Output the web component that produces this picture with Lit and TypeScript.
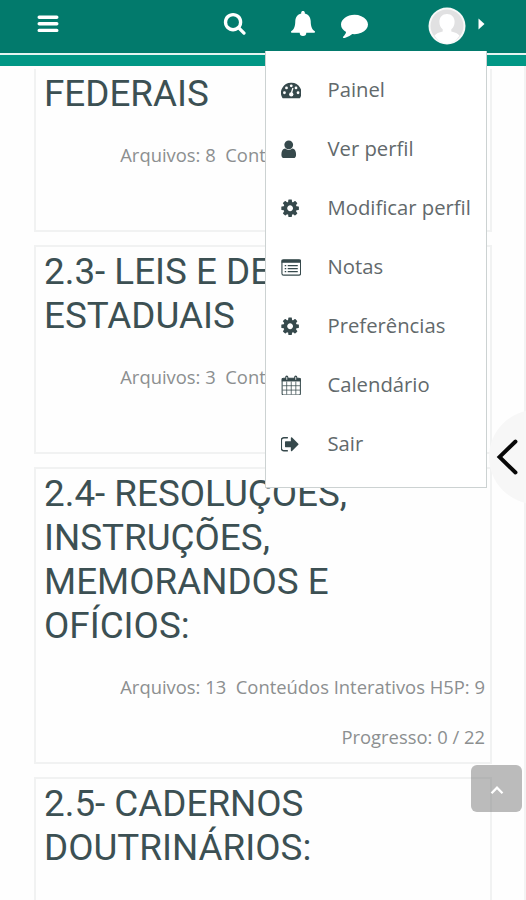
import { LitElement, html, css, svg } from "lit";
import { customElement, property } from "lit/decorators.js";

const fa = (d: string, left: number) => svg`<svg viewBox="${left} 0 1792 1792" fill="currentColor"><path d=${d}></path></svg>`;

const COG = "M1152 896q0-106-75-181t-181-75-181 75-75 181 75 181 181 75 181-75 75-181zm512-109v222q0 12-8 23t-20 13l-185 28q-19 54-39 91 35 50 107 138 10 12 10 25t-9 23q-27 37-99 108t-94 71q-12 0-26-9l-138-108q-44 23-91 38-16 136-29 186-7 28-36 28h-222q-14 0-24.5-8.5t-11.5-21.5l-28-184q-49-16-90-37l-141 107q-10 9-25 9-14 0-25-11-126-114-165-168-7-10-7-23 0-12 8-23 15-21 51-66.5t54-70.5q-27-50-41-99l-183-27q-13-2-21-12.5t-8-23.5v-222q0-12 8-23t19-13l186-28q14-46 39-92-40-57-107-138-10-12-10-24 0-10 9-23 26-36 98.5-107.5t94.5-71.5q13 0 26 10l138 107q44-23 91-38 16-136 29-186 7-28 36-28h222q14 0 24.5 8.5t11.5 21.5l28 184q49 16 90 37l142-107q9-9 24-9 13 0 25 10 129 119 165 170 7 8 7 22 0 12-8 23-15 21-51 66.5t-54 70.5q26 50 41 98l183 28q13 2 21 12.5t8 23.5z";
const SEARCH = "M1216 832q0-185-131.5-316.5t-316.5-131.5-316.5 131.5-131.5 316.5 131.5 316.5 316.5 131.5 316.5-131.5 131.5-316.5zm512 832q0 52-38 90t-90 38q-54 0-90-38l-343-342q-179 124-399 124-143 0-273.5-55.5t-225-150-150-225-55.5-273.5 55.5-273.5 150-225 225-150 273.5-55.5 273.5 55.5 225 150 150 225 55.5 273.5q0 220-124 399l343 343q37 37 37 90z";
const COMMENT = "M1792 896q0 174-120 321.5t-326 233-450 85.5q-70 0-145-8-198 175-460 242-49 14-114 22-17 2-30.5-9t-17.5-29v-1q-3-4-.5-12t2-10 4.5-9.5l6-9 7-8.5 8-9q7-8 31-34.5t34.5-38 31-39.5 32.5-51 27-59 26-76q-157-89-247.5-220t-90.5-281q0-130 71-248.5t191-204.5 286-136.5 348-50.5q244 0 450 85.5t326 233 120 321.5z";
const USER = "M1536 1399q0 109-62.5 187t-150.5 78h-854q-88 0-150.5-78t-62.5-187q0-85 8.5-160.5t31.5-152 58.5-131 94-89 134.5-34.5q131 128 313 128t313-128q76 0 134.5 34.5t94 89 58.5 131 31.5 152 8.5 160.5zm-256-887q0 159-112.5 271.5t-271.5 112.5-271.5-112.5-112.5-271.5 112.5-271.5 271.5-112.5 271.5 112.5 112.5 271.5z";
const SIGN_OUT = "M704 1440q0 4 1 20t.5 26.5-3 23.5-10 19.5-20.5 6.5h-320q-119 0-203.5-84.5t-84.5-203.5v-704q0-119 84.5-203.5t203.5-84.5h320q13 0 22.5 9.5t9.5 22.5q0 4 1 20t.5 26.5-3 23.5-10 19.5-20.5 6.5h-320q-66 0-113 47t-47 113v704q0 66 47 113t113 47h312l11.5 1 11.5 3 8 5.5 7 9 2 13.5zm928-544q0 26-19 45l-544 544q-19 19-45 19t-45-19-19-45v-288h-448q-26 0-45-19t-19-45v-384q0-26 19-45t45-19h448v-288q0-26 19-45t45-19 45 19l544 544q19 19 19 45z";

const gauge = svg`<svg viewBox="0 0 22 22">
  <path fill="currentColor" d="M2.400 19.600a1.200 1.200 0 0 1-1-.6A10.700 10.700 0 0 1 11 3a10.700 10.700 0 0 1 9.600 16a1.200 1.200 0 0 1-1 .6z"></path>
  <g fill="#fff"><circle cx="3.700" cy="13.700" r="1.500"></circle><circle cx="5.900" cy="8.500" r="1.500"></circle>
  <circle cx="11" cy="6.200" r="1.500"></circle><circle cx="16.100" cy="8.500" r="1.500"></circle><circle cx="18.300" cy="13.700" r="1.500"></circle></g>
  <path stroke="#fff" stroke-width="1.400" d="M12.800 8.600 11.200 14"></path><circle cx="11" cy="15.500" r="2.300" fill="#fff"></circle></svg>`;
const listAlt = svg`<svg viewBox="0 0 22 22" fill="none" stroke="currentColor">
  <rect x="1" y="3" width="20" height="16.500" rx="1.800" stroke-width="1.200"></rect>
  <path stroke-width="3.200" d="M.6 4.600H21.400"></path>
  <path stroke-width="1.400" d="M4 9.200h1.600M4 12.400h1.600M4 15.600h1.600M7.200 9.200H18M7.200 12.400H18M7.200 15.600H18"></path></svg>`;
const calendar = svg`<svg viewBox="0 0 22 22" fill="none" stroke="currentColor">
  <rect x="1.200" y="3.600" width="19.600" height="17.800" rx="1.400" stroke-width="1.100"></rect>
  <path stroke-width="3.400" d="M.8 5.200H21.200"></path>
  <path stroke-width=".8" d="M6.100 7V21M11 7V21M15.900 7V21M1.500 11.500H20.500M1.500 16.200H20.500"></path>
  <path stroke-width="3.400" stroke-linecap="round" d="M6.200 2.300V4.700M15.800 2.300V4.700"></path>
  <path stroke="#fff" stroke-width=".9" stroke-linecap="round" d="M6.200 2.500V4.700M15.800 2.500V4.700"></path></svg>`;
const bell = svg`<svg viewBox="0 0 26 28" fill="#fff"><path d="M13 1c1.100 0 1.800.7 1.800 1.600v.8c3.800.8 5.800 3.800 5.900 7.600c.1 5.600 1.300 8.500 4.100 10.300c.5.400.2 1.500-.6 1.500H16.300a3.300 3.300 0 0 1-6.600 0H1.800c-.8 0-1.100-1.100-.6-1.500C4 19.500 5.200 16.600 5.300 11c.1-3.800 2.100-6.800 5.900-7.600v-.8C11.200 1.700 11.900 1 13 1z"></path></svg>`;

interface Section { title: string; files: number; h5p: number; total: number; }

const SECTIONS: Section[] = [
  { title: "FEDERAIS", files: 8, h5p: 10, total: 18 },
  { title: "2.3- LEIS E DECRETOS ESTADUAIS", files: 3, h5p: 10, total: 13 },
  { title: "2.4- RESOLUÇÕES, INSTRUÇÕES, MEMORANDOS E OFÍCIOS:", files: 13, h5p: 9, total: 22 },
  { title: "2.5- CADERNOS DOUTRINÁRIOS:", files: 9, h5p: 12, total: 21 },
];

@customElement("section-card")
class SectionCard extends LitElement {
  @property({ attribute: false }) section!: Section;
  static styles = css`
    :host { display: block; box-sizing: border-box; border: 2px solid #f1f2f2; padding: 3px 5px 0 8px; }
    .title { margin: 0; padding-right: 16px; font: 400 36.8px/43.8px Roboto, sans-serif; color: #3c5053; }
    .meta { margin-top: 14px; font: 18.4px/50px "Open Sans", sans-serif; color: #8c8f90; text-align: right; white-space: pre; }
  `;
  render() {
    const s = this.section;
    return html`<h3 class="title">${s.title}</h3>
      <div class="meta"><div>${`Arquivos: ${s.files}  Conteúdos Interativos H5P: ${s.h5p}`}</div><div>Progresso: 0 / ${s.total}</div></div>`;
  }
}

@customElement("user-menu")
class UserMenu extends LitElement {
  static styles = css`
    :host { display: block; box-sizing: border-box; background: #fff; border: 1px solid #ccd2d2; border-top: 0; padding: 9px 0 14px; }
    .item { display: flex; align-items: center; box-sizing: border-box; height: 59px; padding: 0 0 2px 14.5px; color: #62696b; font: 20.25px/28px "Open Sans", sans-serif; white-space: nowrap; }
    .icon { width: 20.5px; height: 20.5px; margin: 2.5px 26.5px 0 0; color: #36494c; display: flex; }
    .icon svg { width: 20.5px; height: 20.5px; }
  `;
  render() {
    const items = [
      [gauge, "Painel"], [fa(USER, 220), "Ver perfil"], [fa(COG, 100), "Modificar perfil"], [listAlt, "Notas"],
      [fa(COG, 100), "Preferências"], [calendar, "Calendário"], [fa(SIGN_OUT, 100), "Sair"],
    ];
    return html`${items.map(([icon, label]) => html`<div class="item"><span class="icon">${icon}</span>${label}</div>`)}`;
  }
}

@customElement("app-root")
class AppRoot extends LitElement {
  static styles = css`
    :host { display: flex; flex-direction: column; position: relative; width: 526px; height: 900px; overflow: hidden; background: #fefefe; }
    .bar { flex: none; height: 53px; box-sizing: border-box; padding: 0 40px 5px 36px; display: flex; align-items: center; background: #027a6c; color: #fff; }
    .bar svg { display: block; flex: none; }
    .burger { width: 24px; height: 20px; margin-right: 163px; }
    .search { width: 23.500px; height: 24px; margin: 0 43.500px 3px 0; }
    .bell { width: 26px; height: 28px; margin-right: 25px; }
    .chat { width: 27px; height: 27px; margin-right: 60px; }
    .avatar { width: 38px; height: 38px; margin: 4px 12px 0 0; }
    .caret { width: 7px; height: 12px; margin-bottom: 1px; }
    .stripe { flex: none; height: 11px; border-top: 2px solid #e4f4f1; background: #019785; }
    .list { flex: 1; min-height: 0; overflow: hidden; display: flex; flex-direction: column; gap: 13.500px; padding: 3px 34px 0 34px; border-right: 2px solid #f3f3f3; width: 526px; box-sizing: border-box; }
    section-card { flex: none; width: 458px; }
    section-card:first-child { border-top: 0; }
    .menu { position: absolute; left: 265px; top: 51px; width: 222px; }
    .drawer { position: absolute; left: 489px; top: 410px; width: 94px; height: 94px; border-radius: 50%; background: #f7f7f7; }
    .drawer svg { position: absolute; left: 6px; top: 28px; width: 24px; height: 38px; }
    .up { position: absolute; left: 471px; top: 765px; width: 51px; height: 47px; border-radius: 6px; background: rgba(120, 120, 120, .5); display: flex; align-items: center; justify-content: center; }
    .up svg { width: 14px; height: 10px; margin-top: 3px; }
  `;
  render() {
    return html`
      <header class="bar">
        <svg class="burger" viewBox="0 0 24 20"><path stroke="#fff" stroke-width="3.400" stroke-linecap="round" d="M3.200 3.200H20.800M3.200 9.800H20.800M3.200 16.400H20.800"></path></svg>
        <svg class="search" viewBox="0 0 1792 1792" fill="#fff"><path d=${SEARCH}></path></svg>
        <span class="bell">${bell}</span>
        <svg class="chat" viewBox="0 0 1792 1792" fill="#fff"><path d=${COMMENT}></path></svg>
        <svg class="avatar" viewBox="0 0 38 38"><circle cx="19" cy="19" r="18.500" fill="#f8f9f9"></circle><circle cx="19" cy="19" r="16.500" fill="#e1e1e2"></circle>
          <path fill="#fff" d="M19 7c4.600 0 7.600 3.300 7.600 7.700 0 3.400-1.300 6-3.300 7.600v2.200c3.600.8 6.700 2 8.200 4.300A17 17 0 0 1 19 36.500 17 17 0 0 1 6.500 28.800c1.500-2.300 4.600-3.500 8.200-4.300v-2.200c-2-1.600-3.300-4.200-3.300-7.600C11.400 10.300 14.400 7 19 7z"></path></svg>
        <svg class="caret" viewBox="0 0 7 12"><path fill="#fff" d="M.5.500 6.500 6 .5 11.500z"></path></svg>
      </header>
      <div class="stripe"></div>
      <main class="list">${SECTIONS.map((s) => html`<section-card .section=${s}></section-card>`)}</main>
      <div class="drawer"><svg viewBox="0 0 24 38"><path fill="none" stroke="#080808" stroke-width="3.900" stroke-linecap="round" d="M20.500 3.500 4.500 19 20.500 34.500"></path></svg></div>
      <user-menu class="menu"></user-menu>
      <div class="up"><svg viewBox="0 0 14 10"><path fill="none" stroke="#fff" stroke-width="2.300" d="M1.500 8.200 7 2.700l5.500 5.500"></path></svg></div>
    `;
  }
}
